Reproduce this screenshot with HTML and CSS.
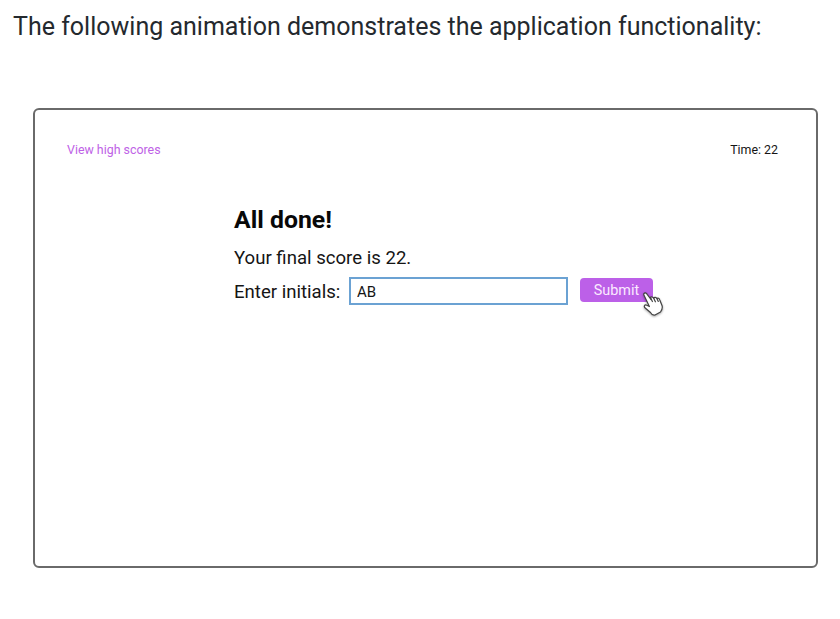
FILE: index.html
```
<!DOCTYPE html>
<html lang="en">
<head>
<meta charset="utf-8">
<title>Code Quiz</title>
<link rel="stylesheet" href="styles.css">
</head>
<body>
<p class="intro">The following animation demonstrates the application functionality:</p>
<main class="frame">
  <header class="topbar">
    <a class="scores">View high scores</a>
    <span class="time">Time: 22</span>
  </header>
  <section class="result">
    <h1>All done!</h1>
    <p class="score">Your final score is 22.</p>
    <div class="entry">
      <label for="initials">Enter initials:</label>
      <input id="initials" type="text" value="AB">
      <button type="button">Submit
        <svg class="cursor" viewBox="0 0 24 28" width="24" height="28"><path d="M3 5.2C2 3.4 4.3 2 5.6 3.6L10 9.5 9.4 7.5C10.4 6.3 12 7 12.7 8.3 13.4 6.8 15.2 7.3 15.9 8.5 17 7.7 18.2 8.3 18.8 10L21 15.5C22 18.5 21 20 19.5 22L14 25Q11 25.5 9.5 22.5L4.5 18.2C2.3 16.5 3.5 14.3 5.8 15.2L8.4 16.5Z"/><path class="fingers" d="M9.4 7.5l2 4M12.7 8.3l1.7 3.5M15.9 8.5l1.4 3"/></svg>
      </button>
    </div>
  </section>
</main>
</body>
</html>
```
FILE: styles.css
```
* { box-sizing: border-box; }
body { margin: 0; height: 619px; background: #fff; color: #151515; font-family: Roboto, sans-serif; overflow: hidden; }
p, h1 { margin: 0; }
.intro { padding: 12px 13px 0; height: 108px; font-size: 25px; line-height: 30px; color: #24292e; white-space: nowrap; }
.frame { width: 785px; height: 460px; margin-left: 33px; border: 2px solid #6a6a6a; border-radius: 6px; padding: 30px 38px 0 32px; }
.topbar { display: flex; justify-content: space-between; font-size: 12.4px; line-height: 20px; }
.scores { color: #be62e6; }
.result { margin: 45px 0 0 167px; }
h1 { font-size: 24.8px; line-height: 30px; color: #080808; }
.score { margin-top: 12px; font-size: 18.6px; line-height: 22px; }
.entry { display: flex; align-items: flex-start; margin-top: 8px; }
label { width: 115px; font-size: 18.6px; line-height: 31px; white-space: nowrap; }
input { width: 219px; height: 28px; margin: 0; padding: 1px 6px 0; border: 2px solid #6ba2d3; font: 15px Roboto, sans-serif; color: #151515; background: #fff; }
button { position: relative; width: 73px; height: 24px; margin: 1px 0 0 12px; padding: 0; border: 0; border-radius: 4px; background: #bc60e8; color: #fbeaff; font: 14.4px Roboto, sans-serif; }
.cursor { position: absolute; left: 61px; top: 12px; fill: #fff; stroke: #444; stroke-width: 1.2; stroke-linejoin: round; stroke-linecap: round; filter: drop-shadow(0 1px 1px rgba(0, 0, 0, 0.35)); }
.fingers { fill: none; }
```
